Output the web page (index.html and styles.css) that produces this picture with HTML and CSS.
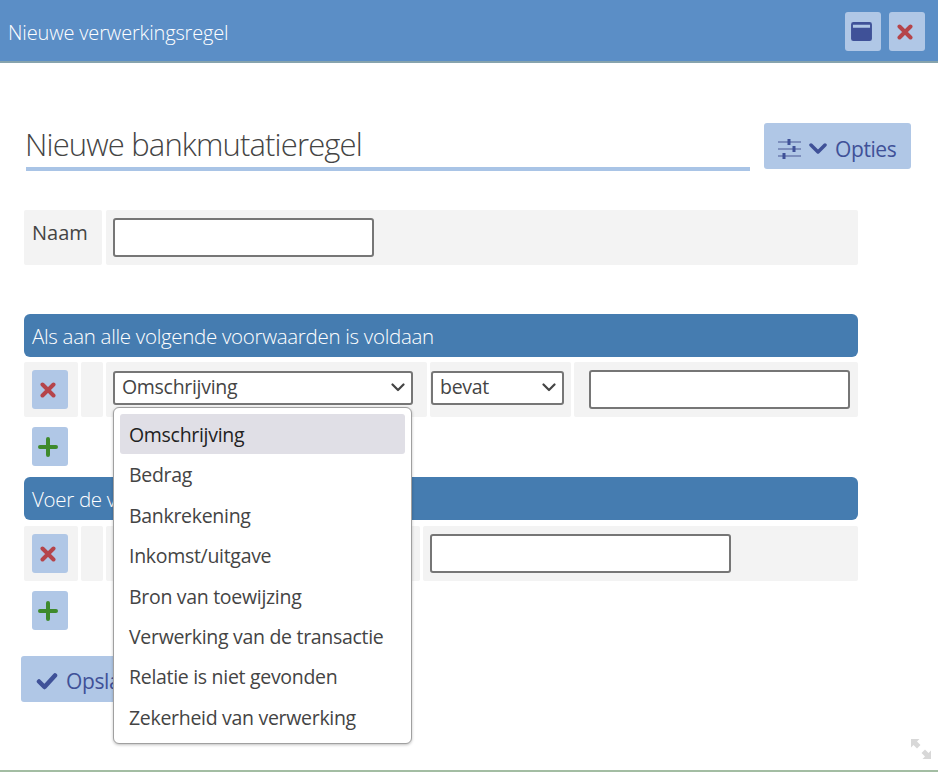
FILE: index.html
```html
<!DOCTYPE html>
<html lang="en">
<head>
    <meta charset="UTF-8">
    <meta name="viewport" content="width=device-width, initial-scale=1.0">
    <title>Nieuwe verwerkingsregel</title>
    <link rel="stylesheet" href="styles.css">
</head>
<body>
    <div class="window">
        <div class="titlebar">
            <span class="titlebar-text">Nieuwe verwerkingsregel</span>
            <button class="btn-icon">
                <svg width="21" height="19" viewBox="0 0 22 20"><path fill="#3f5198" fill-rule="evenodd" d="M2.500 0h17A2.500 2.500 0 0 1 22 2.500v15a2.500 2.500 0 0 1-2.500 2.500h-17A2.500 2.500 0 0 1 0 17.500v-15A2.500 2.500 0 0 1 2.500 0zM2 3v3h18V3z"/></svg>
            </button>
            <button class="btn-icon">
                <svg width="16" height="16" viewBox="0 0 16 16"><path class="cross" d="M2.500 2.500l11 11M13.500 2.500l-11 11"/></svg>
            </button>
        </div>

        <div class="content">
            <div class="heading-row">
                <h1>Nieuwe bankmutatieregel</h1>
                <button class="btn-options">
                    <svg width="23" height="20" viewBox="0 0 23 20"><path fill="none" stroke="#7d8fbd" stroke-width="2" d="M0 3h23M0 10h23M0 17h23"/><path fill="none" stroke="#3f5198" stroke-width="3" d="M11 0v6M16 7v6M6 14v6"/></svg>
                    <svg width="18" height="12" viewBox="0 0 18 12"><path fill="none" stroke="#3f5198" stroke-width="3.500" stroke-linecap="round" stroke-linejoin="round" d="M2 2l7 7 7-7"/></svg>
                    <span>Opties</span>
                </button>
            </div>

            <div class="row row-name">
                <div class="cell cell-label">Naam</div>
                <div class="cell cell-grow"><input class="field field-name" type="text"></div>
            </div>

            <div class="section-head section-first">Als aan alle volgende voorwaarden is voldaan</div>
            <div class="row">
                <div class="cell cell-action"><button class="btn-icon"><svg width="16" height="16" viewBox="0 0 16 16"><path class="cross" d="M2.500 2.500l11 11M13.500 2.500l-11 11"/></svg></button></div>
                <div class="cell cell-empty"></div>
                <div class="cell cell-select">
                    <div class="select select-wide">Omschrijving<svg class="chevron" width="14" height="9" viewBox="0 0 14 9"><path d="M1.500 1.500L7 7l5.500-5.500"/></svg></div>
                    <ul class="dropdown">
                        <li class="active">Omschrijving</li>
                        <li>Bedrag</li>
                        <li>Bankrekening</li>
                        <li>Inkomst/uitgave</li>
                        <li>Bron van toewijzing</li>
                        <li>Verwerking van de transactie</li>
                        <li>Relatie is niet gevonden</li>
                        <li>Zekerheid van verwerking</li>
                    </ul>
                </div>
                <div class="cell cell-operator">
                    <div class="select select-small">bevat<svg class="chevron" width="14" height="9" viewBox="0 0 14 9"><path d="M1.500 1.500L7 7l5.500-5.500"/></svg></div>
                </div>
                <div class="cell cell-grow"><input class="field field-value" type="text"></div>
            </div>
            <div class="add-row"><button class="btn-icon"><svg width="20" height="20" viewBox="0 0 20 20"><path class="plus" d="M10 2v16M2 10h16"/></svg></button></div>

            <div class="section-head">Voer de volgende acties uit</div>
            <div class="row row-action">
                <div class="cell cell-action"><button class="btn-icon"><svg width="16" height="16" viewBox="0 0 16 16"><path class="cross" d="M2.500 2.500l11 11M13.500 2.500l-11 11"/></svg></button></div>
                <div class="cell cell-empty"></div>
                <div class="cell cell-action-type"></div>
                <div class="cell cell-grow"><input class="field field-action" type="text"></div>
            </div>
            <div class="add-row"><button class="btn-icon"><svg width="20" height="20" viewBox="0 0 20 20"><path class="plus" d="M10 2v16M2 10h16"/></svg></button></div>

            <button class="btn-save">
                <svg width="22" height="18" viewBox="0 0 22 18"><path fill="none" stroke="#3f5198" stroke-width="4.500" stroke-linecap="round" stroke-linejoin="round" d="M3 9.500l5.500 5.500L19 3.500"/></svg>
                <span>Opslaan</span>
            </button>
        </div>

        <svg class="resize" width="20" height="20" viewBox="0 0 20 20"><path fill="#d8d8d8" d="M0 0h8.500L6 2.500l3.500 3.500-3.500 3.500L2.500 6 0 8.500zM20 20h-8.500l2.500-2.500-3.500-3.500 3.500-3.500 3.500 3.500 2.500-2.500z"/></svg>
    </div>
</body>
</html>
```

FILE: styles.css
```css
html, body {
    margin: 0;
    padding: 0;
}

body {
    font-family: "Open Sans", "Noto Sans", sans-serif;
    color: #444;
    background-color: #fff;
}

.window {
    position: relative;
    height: 772px;
    box-sizing: border-box;
    border-bottom: 2px solid #a3bda3;
    overflow: hidden;
}

.titlebar {
    display: flex;
    align-items: center;
    gap: 8px;
    height: 63px;
    box-sizing: border-box;
    padding: 2px 13px 0 8px;
    background-color: #5b8ec6;
    border-bottom: 2px solid #86a3ad;
}

.titlebar-text {
    flex: 1;
    padding-top: 2px;
    font-size: 20px;
    font-weight: 300;
    letter-spacing: -0.15px;
    color: #fff;
}

.btn-icon {
    display: flex;
    align-items: center;
    justify-content: center;
    width: 36px;
    height: 39px;
    padding: 0 4px 0 0;
    border: none;
    border-radius: 3px;
    background-color: #b0c7e6;
}

.cross {
    fill: none;
    stroke: #b5444a;
    stroke-width: 4;
    stroke-linecap: round;
}

.plus {
    fill: none;
    stroke: #3f8a2c;
    stroke-width: 4;
    stroke-linecap: round;
}

.content {
    padding: 60px 0 0 24px;
    width: 834px;
}

.heading-row {
    position: relative;
    height: 48px;
    margin-left: 2px;
    width: 724px;
}

h1 {
    margin: 0;
    height: 48px;
    box-sizing: border-box;
    border-bottom: 4px solid #a9c4e6;
    font-size: 31px;
    font-weight: 300;
    line-height: 43px;
    letter-spacing: -0.85px;
    text-indent: -1px;
    color: #444;
}

.btn-options {
    position: absolute;
    left: 738px;
    top: 0;
    display: flex;
    align-items: center;
    gap: 8px;
    width: 147px;
    height: 46px;
    padding: 5px 0 0 14px;
    border: none;
    border-radius: 3px;
    background-color: #b0c7e6;
    font-family: inherit;
    font-size: 21px;
    letter-spacing: -0.4px;
    color: #3f5198;
}

.row {
    display: flex;
    gap: 3px;
    height: 55px;
    margin-top: 5px;
}

.row-name {
    margin-top: 39px;
}

.row-action {
    margin-top: 6px;
}

.cell {
    box-sizing: border-box;
    padding: 8px 7px;
    background-color: #f3f3f3;
    border-radius: 2px;
}

.cell-label {
    width: 78px;
    margin-right: 1px;
    padding-left: 8px;
    font-size: 20px;
    line-height: 30px;
}

.cell-grow {
    flex: 1;
}

.cell-action {
    width: 54px;
    padding-left: 8px;
}

.cell-empty {
    width: 22px;
}

.cell-select {
    position: relative;
    width: 321px;
}

.cell-operator {
    width: 141px;
    padding-left: 0;
}

.cell-action-type {
    width: 314px;
}

.field {
    display: block;
    height: 39px;
    box-sizing: border-box;
    padding: 0 8px;
    border: 2px solid #767676;
    border-radius: 3px;
    background-color: #fff;
}

.field-name {
    width: 261px;
}

.field-value {
    width: 261px;
    margin-left: 8px;
}

.field-action {
    width: 301px;
}

.section-head {
    height: 43px;
    box-sizing: border-box;
    padding-left: 8px;
    border-radius: 6px;
    background-color: #457cb0;
    font-size: 20.5px;
    font-weight: 300;
    line-height: 44px;
    letter-spacing: -0.3px;
    color: #fff;
}

.section-first {
    margin-top: 49px;
}

.select {
    position: relative;
    height: 34px;
    box-sizing: border-box;
    margin-top: 1px;
    padding-left: 7px;
    border: 2px solid #767676;
    border-radius: 3px;
    background-color: #fff;
    font-size: 19.500px;
    line-height: 28px;
    letter-spacing: -0.3px;
}

.select-wide {
    width: 300px;
}

.select-small {
    width: 133px;
    margin-left: 1px;
}

.chevron {
    position: absolute;
    right: 6px;
    top: 10px;
}

.chevron path {
    fill: none;
    stroke: #444;
    stroke-width: 2.200;
    stroke-linecap: round;
    stroke-linejoin: round;
}

.dropdown {
    position: absolute;
    left: 7px;
    top: 45px;
    z-index: 5;
    width: 299px;
    height: 337px;
    box-sizing: border-box;
    margin: 0;
    padding: 6px;
    list-style: none;
    background-color: #fff;
    border: 1px solid #a0a0a0;
    border-radius: 6px;
    box-shadow: 0 1px 3px rgba(0, 0, 0, 0.25);
}

.dropdown li {
    height: 40.400px;
    padding-left: 9px;
    border-radius: 3px;
    font-size: 19.500px;
    line-height: 41px;
    letter-spacing: -0.3px;
}

.dropdown li.active {
    background-color: #e0dfe6;
    color: #222;
}

.add-row {
    padding: 10px 0 10px 8px;
    height: 39px;
    margin-bottom: 1px;
}

.btn-save {
    display: flex;
    align-items: center;
    gap: 8px;
    width: 150px;
    height: 46px;
    margin: 16px 0 0 -3px;
    padding: 4px 0 0 15px;
    border: none;
    border-radius: 3px;
    background-color: #b0c7e6;
    font-family: inherit;
    font-size: 21px;
    letter-spacing: -0.4px;
    color: #3f5198;
}

.resize {
    position: absolute;
    left: 911px;
    top: 739px;
}
```
